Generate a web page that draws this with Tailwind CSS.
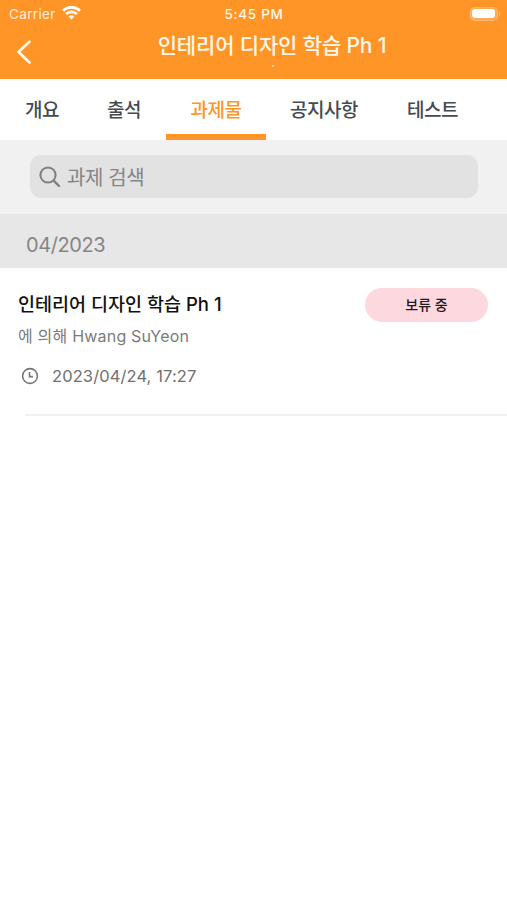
<!DOCTYPE html>
<html lang="ko">
<head>
<meta charset="utf-8">
<title>과제물</title>
<script src="https://cdn.jsdelivr.net/npm/@tailwindcss/browser@4"></script>
</head>
<body class="flex h-[900px] w-[507px] flex-col overflow-hidden bg-white whitespace-nowrap font-['Inter','Noto_Sans_CJK_KR',sans-serif]">
<header class="h-[79px] shrink-0 bg-[#ff9527] text-[#fff8ec]">
  <div class="grid h-[27px] grid-cols-3 items-center pl-[9px] pr-[7px] text-[13.5px]">
    <div class="flex items-center gap-[6px]">
      <span class="pt-px tracking-[0.35px] opacity-90">Carrier</span>
      <svg class="-mt-px" width="19" height="14" viewBox="0 0 19 14" fill="none" stroke="#fff" stroke-width="2.7"><path d="M1 4.8a12.1 12.1 0 0 1 17 0"/><path d="M4.1 8a7.7 7.7 0 0 1 10.8 0"/><path d="M9.5 13.5 6.6 10.6a4.1 4.1 0 0 1 5.8 0Z" fill="#fff" stroke="none"/></svg>
    </div>
    <span class="pt-px pr-[1px] text-center font-medium tracking-[0.7px]">5:45 PM</span>
    <div class="flex items-center justify-end gap-px">
      <div class="h-[14px] w-[28px] rounded-[5px] border border-white/20 bg-white/20 p-[1.5px]"><div class="h-full rounded-[3px] bg-white"></div></div>
      <div class="h-[4px] w-[1.5px] rounded-r bg-white/40"></div>
    </div>
  </div>
  <div class="flex h-[52px] pl-[16px]">
    <svg class="mt-[12px] shrink-0" width="16" height="26" viewBox="0 0 16 26" fill="none" stroke="#fff8ec" stroke-width="2.7" stroke-linecap="round" stroke-linejoin="round"><path d="M13.5 2.7 2.5 13l11 10.5"/></svg>
    <div class="ml-[124px] flex w-[232px] flex-col items-center">
      <h1 class="mt-[5px] h-[28px] text-[21px] leading-[28px] font-medium tracking-[-0.15px]">인테리어 디자인 학습 Ph 1</h1>
      <div class="mt-[5px] ml-[2px] size-[2px] rounded-full bg-[#ffe3bd]"></div>
    </div>
  </div>
</header>
<nav class="flex h-[61px] shrink-0 text-[19px] leading-[63px] font-medium tracking-[-0.5px] text-[#444b50]">
  <div class="w-[83px] pl-[25px]">개요</div>
  <div class="w-[83px] pl-[24px]">출석</div>
  <div class="w-[100px] border-b-[6px] border-[#ff9527] text-center text-[#ff9527]">과제물</div>
  <div class="w-[116px] pl-[24px]">공지사항</div>
  <div class="pl-[25px]">테스트</div>
</nav>
<div class="flex h-[74px] shrink-0 bg-[#f1f1f1] px-[30px] pt-[15px]">
  <div class="flex h-[43px] w-[448px] shrink-0 items-center gap-[6px] rounded-[11px] bg-[#e2e2e2] pl-[9px] text-[20px] leading-[28px] text-[#858585]">
    <svg width="22" height="22" viewBox="0 0 22 22" fill="none" stroke="#7f7f7f" stroke-width="2" stroke-linecap="round"><circle cx="9" cy="9" r="7.6"/><path d="m14.7 14.7 5.3 5.3" stroke-width="2.4"/></svg>
    <span class="pt-[2px] tracking-[-0.4px]">과제 검색</span>
  </div>
</div>
<div class="flex h-[54px] shrink-0 items-center bg-[#e7e7e7] pt-[7px] pl-[26px] text-[20px] tracking-[-0.4px] text-[#858585]"><span>04/2023</span></div>
<main>
  <div class="flex h-[145px] justify-between pt-[20px] pr-[19px] pl-[18px]">
    <div>
      <h2 class="mt-[2px] h-[28px] text-[18.5px] leading-[28px] font-medium text-[#111]">인테리어 디자인 학습 Ph 1</h2>
      <div class="mt-[5px] h-[26px] text-[16px] leading-[26px] tracking-[0.2px] text-[#7b7b7b]">에 의해 Hwang SuYeon</div>
      <div class="mt-[14px] flex h-[26px] items-center gap-[13px] pl-[3px] text-[16.5px] tracking-[0.1px] text-[#707070]">
        <svg width="18" height="18" viewBox="0 0 18 18" fill="none" stroke="#777" stroke-width="1.6"><circle cx="9" cy="9" r="7.4"/><path d="M8.5 5v4.6h3.6"/></svg>
        <span>2023/04/24, 17:27</span>
      </div>
    </div>
    <div class="flex h-[34px] w-[123px] items-center justify-center rounded-full bg-[#fed8df] pb-px text-[14px] font-medium text-[#231a1c]">보류 중</div>
  </div>
  <div class="mt-px ml-[25px] h-[2px] bg-[#f1f1f1]"></div>
</main>
</body>
</html>
